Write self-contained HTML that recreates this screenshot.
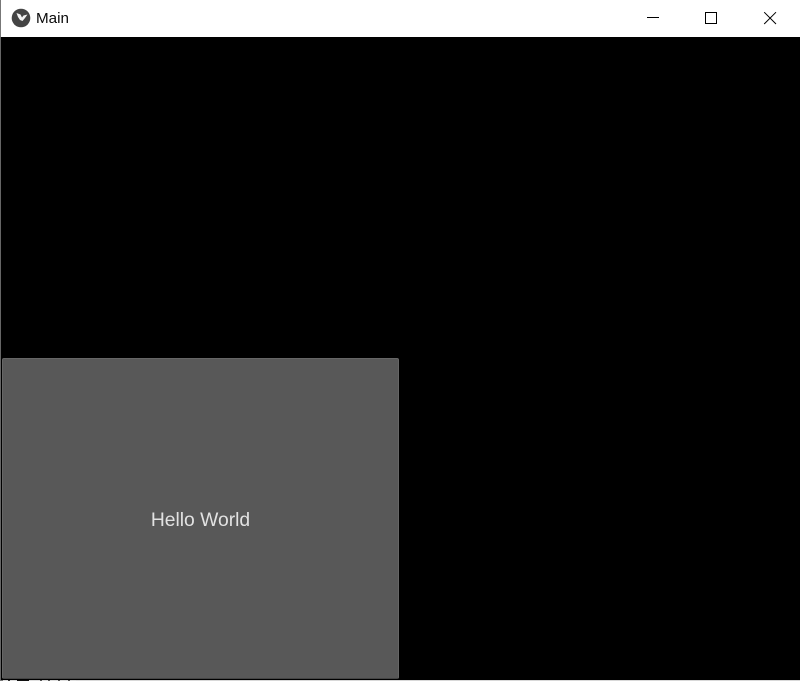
<!DOCTYPE html>
<html>
<head>
<meta charset="utf-8">
<style>
html,body{margin:0;padding:0;background:#000;}
#page{position:relative;width:800px;height:681px;overflow:hidden;background:#000;font-family:"Liberation Sans",sans-serif;}
#bar{position:absolute;left:0;top:0;width:800px;height:37px;background:#fff;}
#edge{position:absolute;left:0;top:37px;width:1px;height:644px;background:#666;}
#edgetop{position:absolute;left:0;top:0;width:1px;height:37px;background:#777;}
#title{position:absolute;left:36px;top:9px;font-size:15.2px;line-height:19px;color:#0a0a0a;}
#btn{position:absolute;left:2px;top:358px;width:397px;height:321px;box-sizing:border-box;background:#585858;border:1px solid #666;border-bottom-color:#444;border-radius:2px;}
#lbl{position:absolute;left:2px;top:510px;width:397px;text-align:center;font-size:19.3px;line-height:22px;color:#e2e2e2;}
#bottom{position:absolute;left:0;top:680px;width:800px;height:1px;background:linear-gradient(to right,#777 0,#777 3px,#ddd 3px,#ddd 8px,#333 8px,#333 10px,#ddd 10px,#ddd 17px,#111 17px,#111 29px,#ddd 29px,#ddd 40px,#555 40px,#555 42px,#ddd 42px,#ddd 48px,#555 48px,#555 50px,#ddd 50px,#ddd 58px,#555 58px,#555 60px,#ddd 60px,#ddd 68px,#555 68px,#555 70px,#ddd 70px,#ddd 76px,#d8d8d8 76px);}
svg{position:absolute;left:0;top:0;}
</style>
</head>
<body>
<div id="page">
<div id="bar"></div>
<div id="edge"></div>
<div id="edgetop"></div>
<svg width="800" height="37" viewBox="0 0 800 37">
<circle cx="21" cy="18" r="9.3" fill="#444"/>
<path d="M16.5 13L20.5 14.5L22 17.5L23.5 15.5L27.5 14.5L25 18L22.5 21L20 20L18 17Z" fill="#f2f2f2"/>
<path d="M647 17.5H659" stroke="#000" stroke-width="1" fill="none"/>
<rect x="705.5" y="12.5" width="11" height="11" stroke="#000" stroke-width="1" fill="none"/>
<path d="M764.2 12.2L776 24M776 12.2L764.2 24" stroke="#000" stroke-width="1" fill="none"/>
</svg>
<div id="title">Main</div>
<div id="btn"></div>
<div id="lbl">Hello World</div>
<div id="bottom"></div>
</div>
</body>
</html>
